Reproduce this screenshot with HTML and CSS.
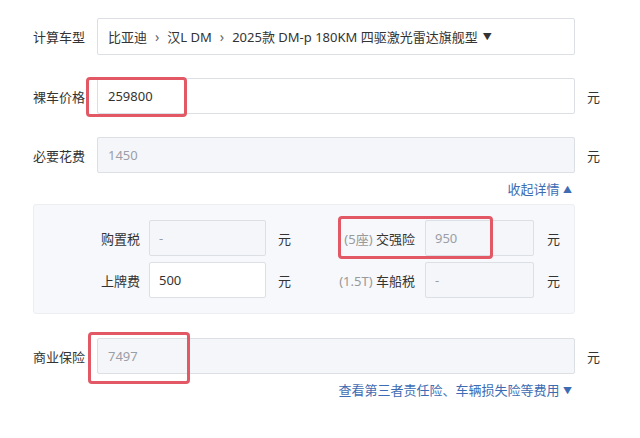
FILE: index.html
```html
<!DOCTYPE html>
<html lang="zh-CN">
<head>
<meta charset="utf-8">
<link rel="stylesheet" href="styles.css">
</head>
<body>
<div class="form">
  <div class="row first">
    <div class="label">计算车型</div>
    <div class="field select"><span>比亚迪<span class="sep">›</span>汉L DM<span class="sep">›</span>2025款 DM-p 180KM 四驱激光雷达旗舰型</span><span class="caret">▼</span></div>
    <div class="unit"></div>
  </div>
  <div class="row">
    <div class="label">裸车价格</div>
    <div class="field wrap"><span class="val">259800</span><span class="mark m1"></span></div>
    <div class="unit">元</div>
  </div>
  <div class="row">
    <div class="label">必要花费</div>
    <div class="field gray"><span class="ph">1450</span></div>
    <div class="unit">元</div>
  </div>
  <div class="linkrow"><span class="link">收起详情 <span class="tri">▲</span></span></div>
  <div class="panel">
    <div class="prow">
      <div class="plabel">购置税</div>
      <div class="pinput gray"><span class="ph">-</span></div>
      <div class="punit">元</div>
      <div class="plabel r"><span class="note">(5座)</span> 交强险</div>
      <div class="pinput small gray wrap"><span class="ph">950</span><span class="mark m2"></span></div>
      <div class="punit r">元</div>
    </div>
    <div class="prow">
      <div class="plabel">上牌费</div>
      <div class="pinput"><span class="val">500</span></div>
      <div class="punit">元</div>
      <div class="plabel r"><span class="note">(1.5T)</span> 车船税</div>
      <div class="pinput small gray"><span class="ph">-</span></div>
      <div class="punit r">元</div>
    </div>
  </div>
  <div class="row biz">
    <div class="label">商业保险</div>
    <div class="field gray wrap"><span class="ph">7497</span><span class="mark m3"></span></div>
    <div class="unit">元</div>
  </div>
  <div class="linkrow low"><span class="link">查看第三者责任险、车辆损失险等费用 <span class="tri">▼</span></span></div>
</div>
</body>
</html>
```
FILE: styles.css
```css
html, body {
  margin: 0;
  padding: 0;
  background: #fff;
}
body {
  font-family: "Noto Sans", "Noto Sans CJK SC", sans-serif;
  font-size: 13px;
  color: #333;
}
.form {
  padding: 18px 0 0 33px;
  width: 580px;
}
.row {
  display: flex;
  align-items: center;
  height: 36px;
  margin-bottom: 23px;
}
.row.first {
  height: 37px;
  margin-bottom: 23px;
}
.label {
  width: 64px;
  flex: none;
  white-space: nowrap;
}
.field {
  box-sizing: border-box;
  width: 478px;
  height: 100%;
  border: 1px solid #dcdfe4;
  border-radius: 2px;
  background: #fff;
  display: flex;
  align-items: center;
  padding-left: 10px;
  white-space: nowrap;
}
.gray {
  background: #f5f6fa;
}
.wrap {
  position: relative;
}
.select .sep {
  color: #666;
  margin: 0 8px;
  font-size: 14px;
}
.caret {
  font-size: 9px;
  margin-left: 5px;
}
.unit {
  padding-left: 12px;
}
.val { color: #333; }
.ph { color: #9a9ea6; }
.linkrow {
  width: 542px;
  text-align: right;
  margin-top: -17px;
  height: 20px;
  line-height: 20px;
  margin-bottom: 5px;
}
.link {
  color: #3d6cb3;
  margin-right: 3px;
}
.tri {
  font-size: 9px;
  vertical-align: 1px;
}
.panel {
  box-sizing: border-box;
  width: 542px;
  background: #f7f8fb;
  border: 1px solid #eceef2;
  border-radius: 3px;
  padding: 15px 0;
  display: flex;
  flex-direction: column;
  gap: 6px;
  margin-bottom: 24px;
}
.prow {
  display: flex;
  align-items: center;
  height: 36px;
}
.plabel {
  width: 106px;
  text-align: right;
  padding-right: 9px;
  white-space: nowrap;
}
.plabel.r {
  width: 89px;
  padding-right: 10px;
}
.note { color: #999; }
.pinput {
  box-sizing: border-box;
  width: 117px;
  height: 36px;
  border: 1px solid #dcdfe4;
  border-radius: 2px;
  background: #fff;
  display: flex;
  align-items: center;
  padding-left: 9px;
}
.pinput.gray { background: #f5f6fa; }
.pinput.small { width: 109px; }
.punit {
  width: 48px;
  padding-left: 12px;
}
.punit.r {
  width: auto;
  padding-left: 13px;
}
.mark {
  position: absolute;
  box-sizing: border-box;
  border: 3px solid #e25864;
  border-radius: 4px;
}
.m1 { left: -12px; top: -2px; width: 101px; height: 40px; }
.m2 { left: -88px; top: -5px; width: 155px; height: 43px; }
.m3 { left: -10px; top: -7px; width: 102px; height: 52px; }
```
